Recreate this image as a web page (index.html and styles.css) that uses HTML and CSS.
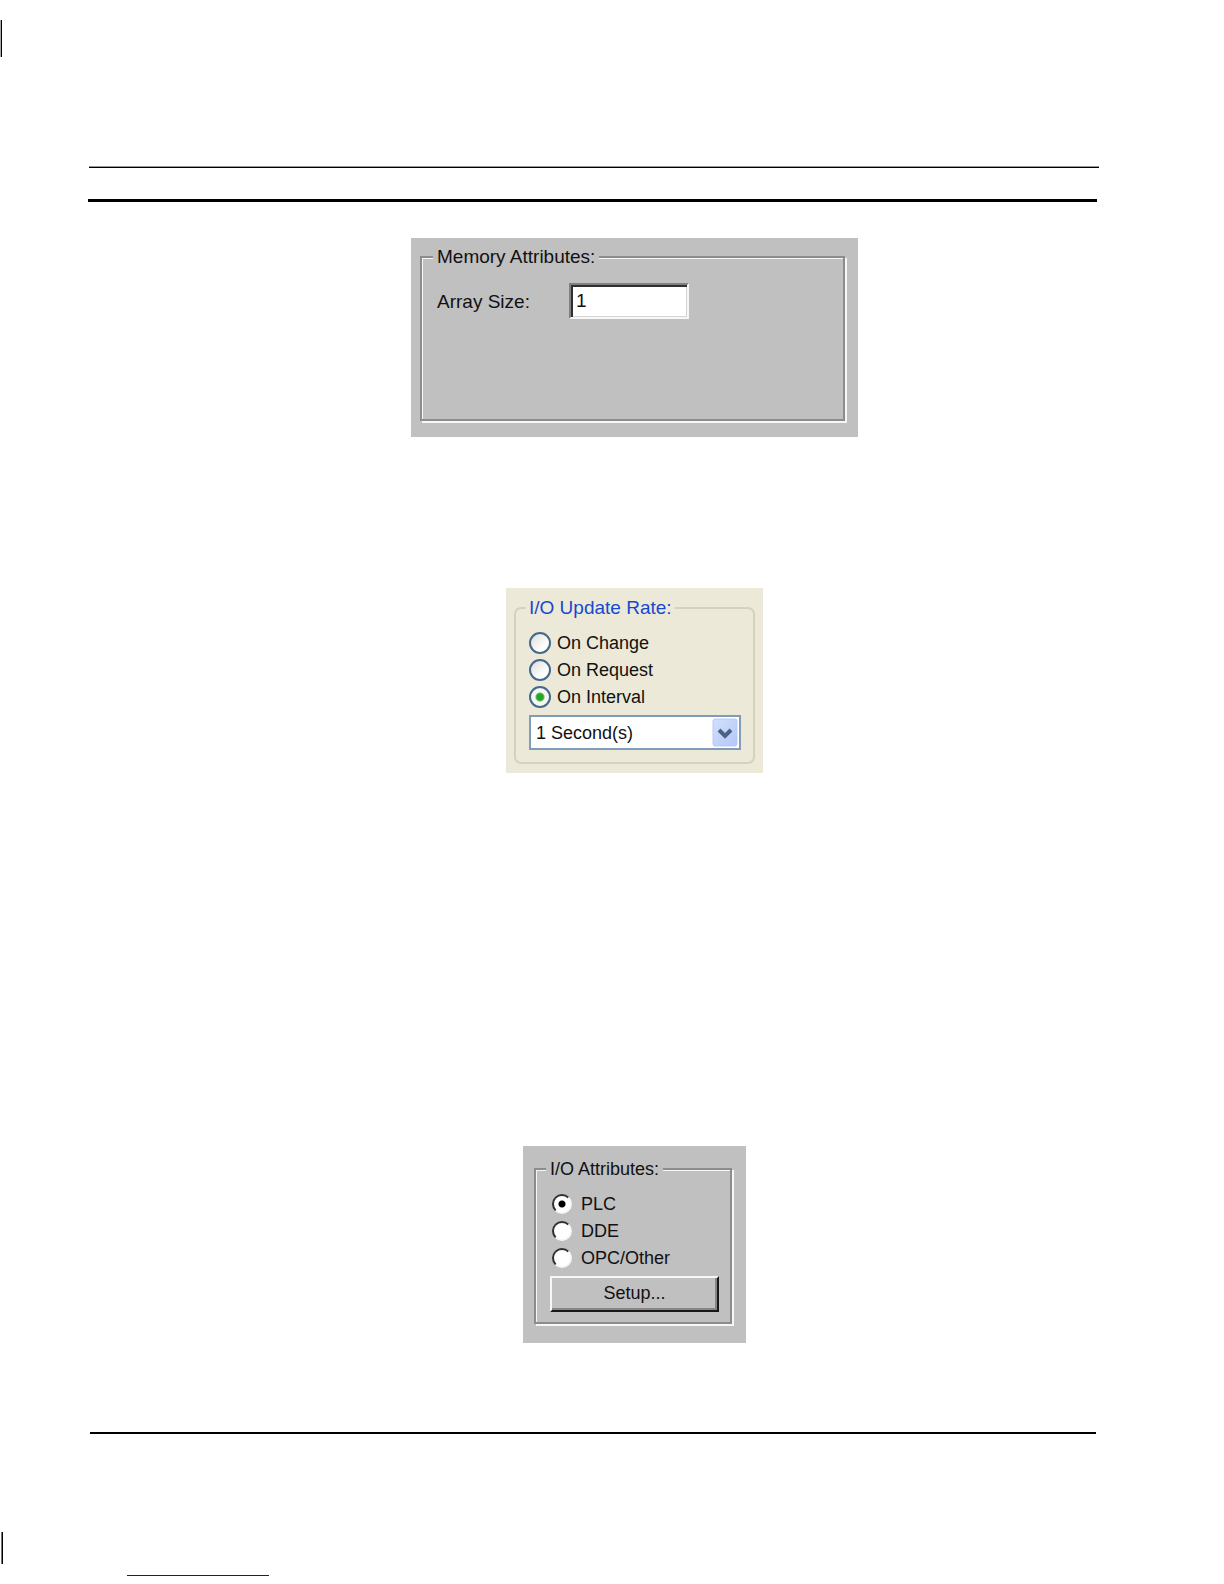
FILE: index.html
```html
<!DOCTYPE html>
<html lang="en">
<head>
<meta charset="utf-8">
<title>Tag Attributes</title>
<link rel="stylesheet" href="styles.css">
</head>
<body>
<div class="page">
  <div class="change-bar change-bar-top"></div>
  <header class="rules">
    <div class="rule rule-thin"></div>
    <div class="rule rule-thick"></div>
  </header>
  <main class="figures">
    <form class="panel panel-memory">
      <fieldset class="group group-etched">
        <legend class="legend">Memory Attributes:</legend>
        <div class="field">
          <label class="field-label" for="array-size">Array Size:</label>
          <input class="field-input" id="array-size" type="text" value="1">
        </div>
      </fieldset>
    </form>

    <form class="panel panel-rate">
      <fieldset class="group group-rounded">
        <legend class="legend">I/O Update Rate:</legend>
        <label class="option"><input class="radio radio-xp" type="radio" name="rate">On Change</label>
        <label class="option"><input class="radio radio-xp" type="radio" name="rate">On Request</label>
        <label class="option"><input class="radio radio-xp" type="radio" name="rate" checked>On Interval</label>
        <div class="combo">
          <select class="combo-select" aria-label="Interval">
            <option>1 Second(s)</option>
          </select>
          <svg class="combo-arrow" viewBox="0 0 26 29" aria-hidden="true">
            <defs>
              <linearGradient id="face" x1="0" y1="0" x2="1" y2="1">
                <stop offset="0" stop-color="#d3e0fd"/>
                <stop offset="1" stop-color="#b3c8f8"/>
              </linearGradient>
            </defs>
            <rect x="1" y="1" width="24" height="27" rx="2" fill="url(#face)" stroke="#b9caf3"/>
            <path d="M7 12l6 6 6-6" fill="none" stroke="#4d6185" stroke-width="4"/>
          </svg>
        </div>
      </fieldset>
    </form>

    <form class="panel panel-io">
      <fieldset class="group group-etched">
        <legend class="legend">I/O Attributes:</legend>
        <label class="option"><input class="radio radio-classic" type="radio" name="source" checked>PLC</label>
        <label class="option"><input class="radio radio-classic" type="radio" name="source">DDE</label>
        <label class="option"><input class="radio radio-classic" type="radio" name="source">OPC/Other</label>
        <button class="button" type="button">Setup...</button>
      </fieldset>
    </form>
  </main>
  <footer class="footer"><div class="rule rule-footer"></div></footer>
  <div class="change-bar change-bar-bottom"></div>
  <div class="link-rule"></div>
</div>
</body>
</html>
```
FILE: styles.css
```css
* {
  box-sizing: border-box;
}

body {
  margin: 0;
  background: #fff;
  color: #111;
  font-family: "Liberation Sans", Arial, sans-serif;
  font-size: 18px;
  line-height: 24px;
}

.page {
  display: flow-root;
  padding-bottom: 8px;
}

/* Revision marks on the outer edge of the sheet */
.change-bar {
  width: 2px;
  background: #000;
}

.change-bar-top {
  height: 37px;
  margin-top: 20px;
  border-left: 1px solid #aaa;
}

.change-bar-bottom {
  height: 32px;
  margin: 98px 0 0 1px;
  border-left: 1px solid #777;
}

.rules {
  margin: 109px 125px 0 88px;
}

.rule {
  background: #000;
}

.rule-thin {
  height: 2px;
  margin-left: 1px;
  border-top: 1px solid #999;
}

.rule-thick {
  height: 3px;
  margin: 31px 2px 0 0;
}

.figures {
  display: flex;
  flex-direction: column;
  align-items: center;
  margin: 36px 127px 89px 88px;
  padding-left: 84px;
}

.footer {
  margin: 0 128px 0 90px;
}

.rule-footer {
  height: 2px;
}

.link-rule {
  width: 142px;
  height: 1px;
  margin: 11px 0 0 127px;
  background: #12129a;
}

.panel {
  margin: 0;
  background: #c0c0c0;
}

.group {
  min-width: 0;
  margin: 0;
}

.group-etched {
  border: 2px solid #8c8c8c;
  box-shadow: 2px 2px #f6f6f6, inset 1px 1px #f6f6f6;
}

.group-rounded {
  border: 2px solid #d3d2bf;
  border-radius: 7px;
}

.legend {
  margin-left: -4px;
  padding: 0 4px;
  background: #c0c0c0;
}

/* Memory attributes */
.panel-memory {
  width: 447px;
  max-width: 100%;
  margin-bottom: 151px;
  padding: 7px 13px 16px 9px;
  font-size: 19px;
}

.panel-memory .group {
  min-height: 176px;
  padding: 14px 15px;
}

.field {
  display: flex;
  align-items: center;
}

.field-label {
  width: 132px;
  padding-top: 2px;
}

.field-input {
  width: 120px;
  height: 36px;
  padding: 0 5px;
  border: 2px solid;
  border-color: #808080 #f6f6f6 #f6f6f6 #808080;
  border-radius: 0;
  outline: 0;
  background: #fff;
  box-shadow: inset 2px 2px #303030, inset -1px -1px #d4d4d4;
  color: inherit;
  font: inherit;
}

/* Update rate */
.panel-rate {
  width: 257px;
  margin-bottom: 373px;
  padding: 8px 8px 9px;
  background: #ece9d8;
}

.panel-rate .group {
  padding: 9px 12px 12px 13px;
}

.panel-rate .legend {
  margin-left: -3px;
  padding: 0 3px;
  background: #ece9d8;
  color: #1549cf;
  font-size: 19px;
}

.option {
  display: flex;
  align-items: center;
  height: 27px;
}

.radio {
  flex: none;
  margin: 0;
  appearance: none;
  border-radius: 50%;
}

.radio-xp {
  width: 22px;
  height: 22px;
  margin-right: 6px;
  border: 2px solid #44688c;
  background: linear-gradient(135deg, #dcdcd6, #fff 70%);
}

.radio-xp:checked {
  background: radial-gradient(circle, #28a428 3px, #58bf58 4px, #f6f6f3 5px);
}

.combo {
  position: relative;
  margin-top: 5px;
}

.combo-select {
  display: block;
  width: 100%;
  height: 35px;
  padding: 0 32px 0 5px;
  appearance: none;
  border: 2px solid #7f9db9;
  border-radius: 0;
  background: #fff;
  color: inherit;
  font: inherit;
}

.combo-arrow {
  position: absolute;
  top: 3px;
  right: 3px;
  width: 26px;
  height: 29px;
  pointer-events: none;
}

/* I/O attributes */
.panel-io {
  width: 223px;
  padding: 11px 14px 19px 11px;
}

.panel-io .group {
  padding: 9px 11px 10px 14px;
}

.radio-classic {
  width: 20px;
  height: 20px;
  margin: 0 9px 0 2px;
  border: 2px solid;
  border-color: #303030 #f6f6f6 #f6f6f6 #303030;
  background: #fff;
}

.radio-classic:checked {
  background: radial-gradient(circle, #000 3px, #fff 4px);
}

.button {
  display: block;
  width: 100%;
  height: 36px;
  margin-top: 5px;
  padding: 0 0 2px;
  border: 2px solid;
  border-color: #f6f6f6 #181818 #181818 #f6f6f6;
  border-radius: 0;
  background: #c0c0c0;
  box-shadow: inset -2px -2px #868686;
  color: inherit;
  font: inherit;
}
```
